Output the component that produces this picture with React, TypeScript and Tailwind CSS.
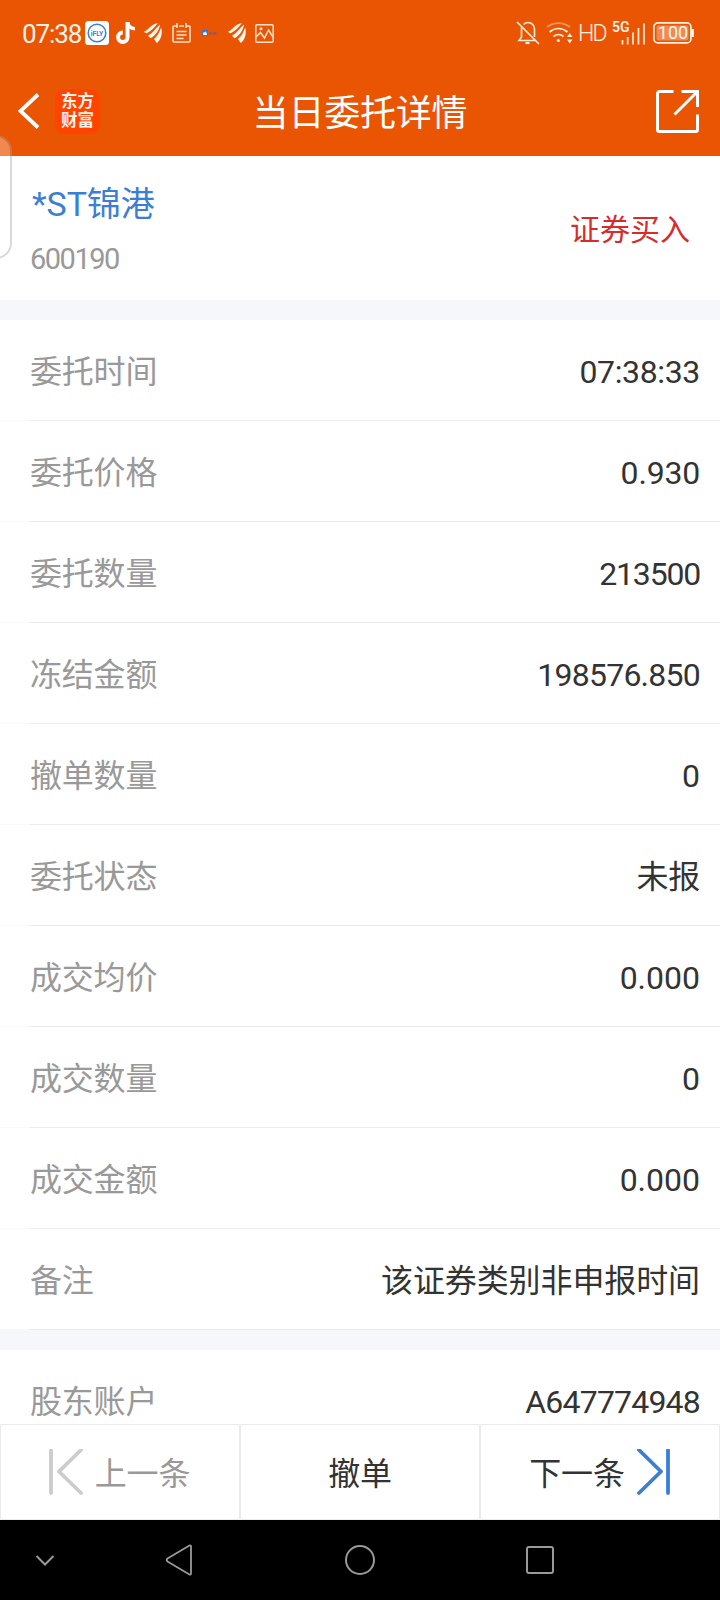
import type { ReactNode } from 'react'

// Order fields shown between the two grey separators
const fields = [
  { label: '委托时间', value: '07:38:33', tracking: 'tracking-[-0.35px]' },
  { label: '委托价格', value: '0.930', tracking: 'tracking-[-0.2px]' },
  { label: '委托数量', value: '213500', tracking: 'tracking-[-1.2px]' },
  { label: '冻结金额', value: '198576.850', tracking: 'tracking-[-0.75px]' },
  { label: '撤单数量', value: '0', tracking: 'tracking-normal' },
  { label: '委托状态', value: '未报', tracking: 'tracking-[-0.2px]' },
  { label: '成交均价', value: '0.000', tracking: 'tracking-[0px]' },
  { label: '成交数量', value: '0', tracking: 'tracking-normal' },
  { label: '成交金额', value: '0.000', tracking: 'tracking-[0px]' },
  { label: '备注', value: '该证券类别非申报时间', tracking: 'tracking-[-0.1px]' },
]

function WingIcon() {
  return (
    <svg className="h-5 w-[18px]" viewBox="0 0 18 20" fill="#fff5e8">
      <path d="M0 8.500C4.500 7.500 6 1.500 14 0c-2.500 2.500-4.500 7-11.500 10.200C1.500 10.200.5 9.500 0 8.500z" />
      <path d="M4 12.500C9 10.500 11.500 5 16 1.500 15.500 6 12.500 12 6.500 15.200c-1-.7-1.800-1.500-2.500-2.700z" />
      <path d="M10 16C14 13 15.500 8.500 17.200 4.500c1.200 5 .8 11-4.200 15.500-1-1-2.200-2.500-3-4z" />
    </svg>
  )
}

function StatusBar() {
  return (
    <div className="flex h-[66px] items-center pl-[22px] pr-[25px] text-[#fff3e6]">
      <span className="w-[63px] pt-[3px] text-[26px] tracking-[-1.1px] whitespace-nowrap">07:38</span>

      {/* Notification icons */}
      <svg className="h-6 w-6" viewBox="0 0 24 24">
        <rect width="24" height="24" rx="3.500" fill="#fff" />
        <circle cx="12" cy="12" r="8.800" fill="none" stroke="#3b7fd0" strokeWidth="1.500" />
        <text x="12" y="14.500" textAnchor="middle" fontSize="6.800" fontWeight="700" fill="#3b7fd0" fontFamily="Roboto, sans-serif">iFLY</text>
      </svg>
      <svg className="ml-[7px] h-[22px] w-[19px]" viewBox="0 0 19 22" fill="none" stroke="#fff" strokeWidth="4">
        <path d="M11.500 0v15.300a4.700 4.700 0 1 1-4.700-4.700" />
        <path d="M11.500 0c.5 4 3 6.500 7.500 6.800" strokeWidth="3.500" />
      </svg>
      <div className="ml-[9px]"><WingIcon /></div>
      <svg className="ml-2.5 h-5 w-[19px]" viewBox="0 0 19 20" fill="none" stroke="#ffe3cc" strokeWidth="1.600">
        <path d="M5 3H2a1 1 0 0 0-1 1v14a1 1 0 0 0 1 1h15a1 1 0 0 0 1-1V4a1 1 0 0 0-1-1h-3M7 3h5M5 0v5M14 0v5M4.500 8.500h10M4.500 12h10M4.500 15.500h7" />
      </svg>
      <svg className="ml-[11px] h-1.5 w-[15px]" viewBox="0 0 15 6">
        <rect width="6" height="6" rx="1" fill="#3477d9" />
        <path d="M1.200 5V2.500h1.300L3.500 1v1.500h1.200V5z" fill="#fff" />
        <path d="M7 3.500h3M11 3.500h3.500" stroke="#8a5a78" strokeWidth="2.500" />
      </svg>
      <div className="ml-[11px]"><WingIcon /></div>
      <svg className="ml-[9px] h-[19px] w-[19px]" viewBox="0 0 19 19" fill="none" stroke="#ffe3cc" strokeWidth="1.500">
        <rect x="0.800" y="0.800" width="17.400" height="17.400" rx="1.200" />
        <path d="M1 13l4.500-4.500 4 5.500 4-8L18 13" />
        <circle cx="6" cy="4.800" r="0.800" />
      </svg>

      {/* System icons */}
      <svg className="ml-auto h-6 w-6" viewBox="0 0 24 24" fill="none" stroke="#fff0e0" strokeWidth="1.600">
        <path d="M5.500 6.500V16L3 19.500h16.500M7.500 3.500C9 2 10.500 1.500 12 1.500c4 0 6.500 3 6.500 6.500v8M1 1l22 22" />
        <path d="M9.500 22h4" strokeWidth="2.200" />
      </svg>
      <svg className="ml-1.5 h-[22px] w-[27px]" viewBox="0 0 27 22" fill="none" stroke="#fff0e0" strokeWidth="1.700">
        <path d="M1 5c7-5.300 16-5.300 23 0" stroke="#f4935c" />
        <path d="M3.500 10c5.500-4.700 12.500-4.700 18 0M7.500 14.500c3-2.700 7-2.700 10 0" />
        <circle cx="12.300" cy="18.500" r="1.600" fill="#fff0e0" stroke="none" />
        <path d="M21 15l2.700-4 2.700 4zM21 17.500l2.700 4 2.700-4z" fill="#fff0e0" stroke="none" />
      </svg>
      <span className="ml-[5px] w-[28px] pt-0.5 text-[23px] font-[360] tracking-[-1.800px]">HD</span>
      <svg className="ml-1.5 h-[23px] w-[34px] overflow-visible" viewBox="0 0 34 23" stroke="#ffe9d6" strokeWidth="1.700">
        <text x="0" y="10" fontSize="14" fontWeight="600" fill="#fff3e6" stroke="none" fontFamily="Roboto, sans-serif">5G</text>
        <path d="M10.500 18v4.500M15.700 15v7.500M21 10.500v12M26.500 6v16.500M32 1.500v21" />
      </svg>
      <svg className="ml-[7px] h-[22px] w-[42px]" viewBox="0 0 42 22">
        <rect x="0.900" y="0.900" width="37" height="20" rx="4" fill="none" stroke="#fff0e0" strokeWidth="1.700" />
        <rect x="3.500" y="3.500" width="32" height="15" rx="2" fill="#f08a50" />
        <path d="M39.500 7v8" stroke="#fff0e0" strokeWidth="3" />
        <text x="20" y="17.200" textAnchor="middle" fontSize="18" fontWeight="400" fill="#fff8f0" fontFamily="Roboto, sans-serif">100</text>
      </svg>
    </div>
  )
}

function Header() {
  return (
    <header className="grid h-[90px] grid-cols-[120px_1fr_120px] items-center text-white">
      <div className="flex items-center pl-[18px]">
        <svg className="h-9 w-[22px]" viewBox="0 0 22 36" fill="none" stroke="#fff" strokeWidth="3.800">
          <path d="M20 1.500L2.500 18 20 34.500" />
        </svg>
        <div className="ml-[15px] flex h-[45px] w-[45px] items-center justify-center rounded-[9px] bg-[#ff4400]">
          <p className="w-[33px] text-[16.5px] leading-[19px] font-bold break-all text-[#fff3e8]">东方财富</p>
        </div>
      </div>
      <h1 className="pt-[5px] text-center text-[36px] leading-none tracking-[-0.2px]">当日委托详情</h1>
      <svg className="mr-[21px] h-[43px] w-[43px] justify-self-end" viewBox="0 0 43 43" fill="none" stroke="#fff" strokeWidth="3">
        <path d="M17.500 1.500h-14a2 2 0 0 0-2 2v36a2 2 0 0 0 2 2h36a2 2 0 0 0 2-2V24.500M25.500 1.500h16V17M41 2L18.500 24.500" />
      </svg>
    </header>
  )
}

function Row({ label, value, tracking }: { label: string; value: string; tracking: string }) {
  return (
    <div className="flex h-[101px] shrink-0 flex-col">
      <div className="flex flex-1 items-center justify-between pt-[3px] pr-5 pl-[30px] text-[32px] leading-none">
        <span className="tracking-[-0.2px] text-[#999999]">{label}</span>
        <span className={`text-[#333333] ${tracking}`}>{value}</span>
      </div>
      <div className="flex h-px bg-[#ebebeb]">
        <div className="w-[30px] bg-[#f9f9f9]" />
      </div>
    </div>
  )
}

function ActionButton({ children }: { children: ReactNode }) {
  return (
    <button className="flex h-24 items-center justify-center border border-[#ebebeb] text-[32px] leading-none tracking-[-0.2px] text-[#333333]">
      {children}
    </button>
  )
}

export default function App() {
  return (
    <div className="relative flex h-[1600px] w-[720px] flex-col overflow-hidden bg-white font-[Roboto,'Noto_Sans_CJK_SC',sans-serif] font-normal">
      <div className="h-[156px] shrink-0 bg-[#ea5504]">
        <StatusBar />
        <Header />
      </div>

      {/* Edge panel handle */}
      <div className="absolute top-[135px] -left-6 h-[124px] w-9 rounded-[16px] border-2 border-black/15 bg-white/30" />

      <main className="flex min-h-0 flex-1 flex-col overflow-hidden">
        <section className="flex h-[144px] shrink-0 items-center justify-between pt-[3px] pr-[30px] pl-[30px]">
          <div className="flex flex-col">
            <span className="pl-0.5 text-[34px] leading-[48px] tracking-[-0.1px] text-[#3a7fd5]">*ST锦港</span>
            <span className="mt-[11px] text-[29px] leading-[40px] tracking-[-1.5px] text-[#999999]">600190</span>
          </div>
          <span className="text-[30px] leading-none text-[#d92b2b]">证券买入</span>
        </section>

        <div className="h-5 shrink-0 bg-[#f6f7fa]" />
        {fields.map((field) => (
          <Row key={field.label} {...field} />
        ))}
        <div className="h-5 shrink-0 bg-[#f6f7fa]" />
        <Row label="股东账户" value="A647774948" tracking="tracking-[-0.8px]" />
      </main>

      {/* Order actions */}
      <div className="grid h-24 shrink-0 grid-cols-3 bg-white">
        <ActionButton>
          <svg className="mr-[12px] -ml-px h-[47px] w-[34px]" viewBox="0 0 34 47" fill="none" stroke="#cccccc" strokeWidth="3.800" strokeLinecap="round" strokeLinejoin="round">
            <path d="M2 1v43M32 1L10 22.500 32 44" />
          </svg>
          <span className="pt-1 text-[#999999]">上一条</span>
        </ActionButton>
        <ActionButton>
          <span className="pt-1">撤单</span>
        </ActionButton>
        <ActionButton>
          <span className="pt-1">下一条</span>
          <svg className="ml-[12px] h-[47px] w-[34px]" viewBox="0 0 34 47" fill="none" stroke="#3a7fd5" strokeWidth="3.800" strokeLinecap="round" strokeLinejoin="round">
            <path d="M31 1v43M2 1l22 21.500L2 44" />
          </svg>
        </ActionButton>
      </div>

      {/* System navigation */}
      <nav className="flex h-20 shrink-0 items-center bg-black pl-[35px]">
        <svg className="h-[11px] w-5" viewBox="0 0 20 11" fill="none" stroke="#999999" strokeWidth="2">
          <path d="M1.500 1L10 9.500 18.500 1" />
        </svg>
        <svg className="ml-[110px] h-8 w-[28px]" viewBox="0 0 28 32" fill="none" stroke="#999999" strokeWidth="1.800" strokeLinejoin="round">
          <path d="M24.500 1.500L2.500 14.500q-1.500 1.500 0 3l22 13q1.500.5 1.500-1V2.500q0-1.500-1.500-1z" />
        </svg>
        <div className="ml-[152px] h-[30px] w-[30px] rounded-full border-2 border-[#999999]" />
        <div className="ml-[151px] h-7 w-[28px] rounded-[3px] border-2 border-[#999999]" />
      </nav>
    </div>
  )
}
